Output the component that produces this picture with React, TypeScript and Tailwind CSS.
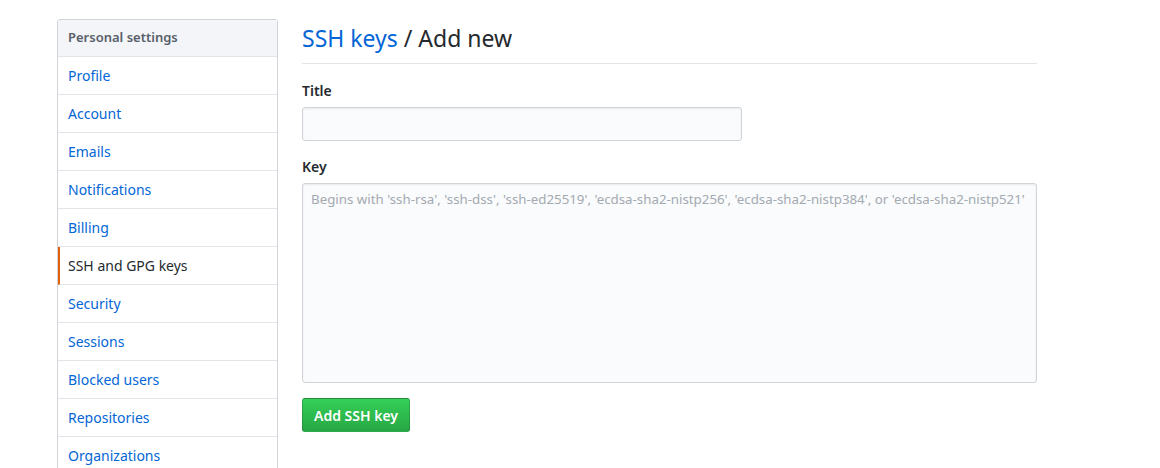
import React from "react";

const items = [
  "Profile",
  "Account",
  "Emails",
  "Notifications",
  "Billing",
  "SSH and GPG keys",
  "Security",
  "Sessions",
  "Blocked users",
  "Repositories",
  "Organizations",
];

export default function App() {
  return (
    <div
      className="min-h-[468px] bg-white pl-[57px] pt-[19px] flex items-start gap-[24px] text-[#24292e]"
      style={{ fontFamily: '"Noto Sans", "Open Sans", sans-serif' }}
    >
      <nav className="w-[221px] shrink-0 border border-[#d1d5da] rounded-t-[3px] overflow-hidden">
        <div className="h-[37px] flex items-center px-[10px] bg-[#f3f5f8] border-b border-[#e1e4e8] text-[13px] font-semibold text-[#586069]">
          Personal settings
        </div>
        {items.map((it) => {
          const sel = it === "SSH and GPG keys";
          return (
            <div
              key={it}
              className={
                sel
                  ? "h-[38px] flex items-center pl-[8px] pr-[10px] border-l-2 border-l-[#e36209] border-b border-b-[#e1e4e8] text-[14px] text-[#24292e]"
                  : "h-[38px] flex items-center px-[10px] border-b border-[#e1e4e8] text-[14px] text-[#0366d6]"
              }
            >
              {it}
            </div>
          );
        })}
      </nav>
      <main className="w-[735px] shrink-0">
        <div className="h-[45px] border-b border-[#e1e4e8] flex items-center">
          <h2 className="text-[23px] leading-[30px] font-normal -mt-[6px]">
            <span className="text-[#0366d6]">SSH keys</span> / Add new
          </h2>
        </div>
        <div className="pt-[17px]">
          <label className="block text-[14px] font-semibold leading-[20px] mb-[6px]">Title</label>
          <div className="w-[440px] h-[34px] bg-[#fafbfc] border border-[#d1d5da] rounded-[3px] shadow-[inset_0_1px_2px_rgba(27,31,35,0.075)]" />
          <label className="block text-[14px] font-semibold leading-[20px] mt-[16px] mb-[6px]">Key</label>
          <div className="w-[735px] h-[200px] bg-[#fafbfc] border border-[#d1d5da] rounded-[3px] shadow-[inset_0_1px_2px_rgba(27,31,35,0.075)] px-[8px] pt-[6px] text-[13.3px] text-[#a3aab1] whitespace-nowrap overflow-hidden">
            Begins with 'ssh-rsa', 'ssh-dss', 'ssh-ed25519', 'ecdsa-sha2-nistp256', 'ecdsa-sha2-nistp384', or 'ecdsa-sha2-nistp521'
          </div>
          <button className="mt-[15px] h-[34px] px-[11px] rounded-[3px] border border-[rgba(27,31,35,0.2)] bg-gradient-to-b from-[#34d058] to-[#28a745] text-white text-[14px] font-semibold">
            Add SSH key
          </button>
        </div>
      </main>
    </div>
  );
}
